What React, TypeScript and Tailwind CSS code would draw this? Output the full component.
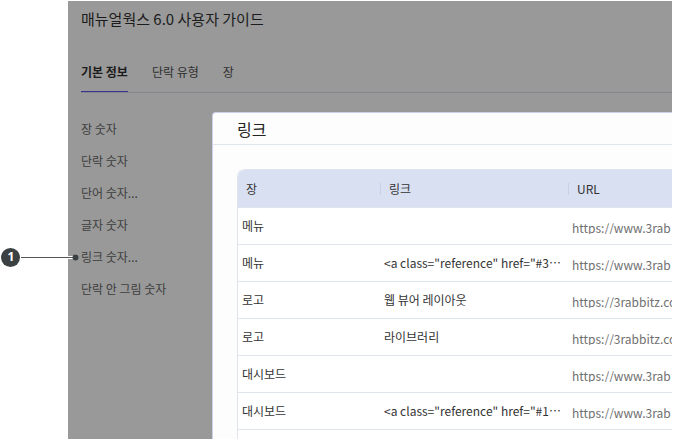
const tabs = ["기본 정보", "단락 유형", "장"];

const menuItems = [
  { label: "장 숫자" },
  { label: "단락 숫자" },
  { label: "단어 숫자..." },
  { label: "글자 숫자" },
  { label: "링크 숫자...", marker: 1 },
  { label: "단락 안 그림 숫자" },
];

const rows = [
  { chapter: "메뉴", link: "", url: "https://www.3rab" },
  {
    chapter: "메뉴",
    link: '<a class="reference" href="#3',
    cut: true,
    url: "https://www.3rab",
  },
  { chapter: "로고", link: "웹 뷰어 레이아웃", url: "https://3rabbitz.co" },
  { chapter: "로고", link: "라이브러리", url: "https://3rabbitz.co" },
  { chapter: "대시보드", link: "", url: "https://www.3rab" },
  {
    chapter: "대시보드",
    link: '<a class="reference" href="#1',
    cut: true,
    url: "https://www.3rab",
  },
  { chapter: "", link: "", url: "" },
];

// Numbered badge with a leader line that ends in a dot
function Marker({ n }: { n: number }) {
  return (
    <span className="absolute top-1/2 -left-20 flex h-5 w-20 -translate-y-1/2 items-center">
      <svg
        className="absolute inset-0"
        width="80"
        height="20"
        viewBox="0 0 80 20"
        aria-hidden="true"
      >
        <path d="M20 10.5H74" stroke="#fff" strokeWidth="3" />
        <path d="M20 10.5H74" stroke="#53575a" strokeWidth="1" />
        <circle cx="74.5" cy="10.5" r="3" fill="#3b4043" />
        <circle cx="9.5" cy="10.5" r="9.5" fill="#3b4043" />
      </svg>
      <span className="relative w-5 text-center font-['Open_Sans',sans-serif] text-xs font-bold text-white">
        {n}
      </span>
    </span>
  );
}

function LinkTable() {
  return (
    <div className="overflow-hidden rounded-tl-lg border-t border-l border-[#dfe4ef] bg-white">
      <table className="w-full table-fixed border-separate border-spacing-0 text-left text-xs text-[#333]">
        <colgroup>
          <col className="w-[142px]" />
          <col className="w-[188px]" />
          <col />
        </colgroup>
        <thead>
          <tr className="h-[38px] bg-[#d9e0f2]">
            {["장", "링크", "URL"].map((title, i) => (
              <th
                key={title}
                scope="col"
                className="border-b border-[#dfe4ef] p-0 font-normal"
              >
                <div
                  className={`flex h-3 items-center pl-2 ${i === 0 ? "" : "border-l border-[#ccd0e4]"}`}
                >
                  {title}
                </div>
              </th>
            ))}
          </tr>
        </thead>
        <tbody>
          {rows.map((row, i) => (
            <tr key={i} className="h-[37px]">
              <td className="border-b border-[#dfe4ef] py-0 pr-2 pl-1">
                {row.chapter}
              </td>
              <td className="border-b border-[#dfe4ef] py-0 pl-1 whitespace-nowrap">
                {row.link}
                {/* the Japanese face centres its ellipsis */}
                {row.cut && (
                  <span
                    lang="ja"
                    className="font-['Noto_Sans_CJK_JP',sans-serif]"
                  >
                    …
                  </span>
                )}
              </td>
              <td className="border-b border-[#dfe4ef] py-0 pl-1">
                {row.url && (
                  <a
                    href={row.url}
                    className="block h-4 overflow-hidden pt-0.5 leading-4 whitespace-nowrap text-[#6f6f6f]"
                  >
                    {row.url}
                  </a>
                )}
              </td>
            </tr>
          ))}
        </tbody>
      </table>
    </div>
  );
}

function LinkDialog() {
  return (
    <section
      role="dialog"
      aria-labelledby="dialog-title"
      className="absolute top-[111px] right-0 bottom-0 left-36 overflow-hidden rounded-tl border-t border-l border-[#ccd0ea] bg-[#fdfdfd]"
    >
      <header className="flex h-8 items-center border-b border-[#dfe6f0] pl-6">
        <h2 id="dialog-title" className="text-base text-[#222]">
          링크
        </h2>
      </header>
      <div className="pt-6 pl-6">
        <LinkTable />
      </div>
    </section>
  );
}

function App() {
  return (
    <div className="h-screen overflow-hidden bg-white py-px pr-px pl-[68px] font-['Noto_Sans_CJK_KR',sans-serif]">
      <main className="relative h-full bg-[#999]">
        <h1 className="pt-2 pl-[13px] text-[15px] leading-5 text-[#1c1c1c]">
          매뉴얼웍스 6.0 사용자 가이드
        </h1>

        <div className="mt-6 ml-[13px] flex gap-6 border-b border-[#86868c] text-xs">
          {tabs.map((tab, i) => (
            <button
              key={tab}
              type="button"
              className={`h-[39px] cursor-pointer border-b ${
                i === 0
                  ? "border-[#3a3292] font-bold text-[#1c1c1c]"
                  : "border-transparent text-[#2e2e2e]"
              }`}
            >
              {tab}
            </button>
          ))}
        </div>

        <nav className="mt-5 ml-[13px]">
          <ul className="text-xs text-[#3d3d3d]">
            {menuItems.map((item) => (
              <li key={item.label} className="relative flex h-8 items-center">
                {item.marker && <Marker n={item.marker} />}
                <a href="#">{item.label}</a>
              </li>
            ))}
          </ul>
        </nav>

        <LinkDialog />
      </main>
    </div>
  );
}

export default App;
